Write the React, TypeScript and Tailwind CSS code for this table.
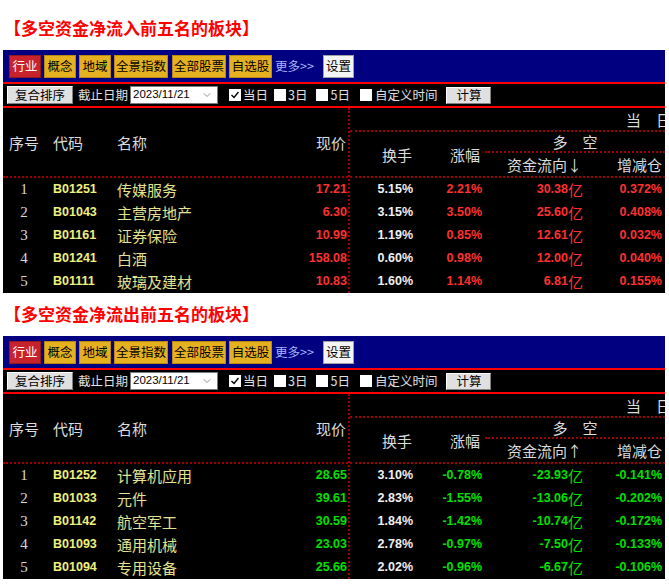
import React from 'react';
import { ChevronDown } from 'lucide-react';

type Row = {
  code: string;
  name: string;
  price: string;
  turnover: string;
  change: string;
  flow: string;
  pos: string;
};

const inflow: Row[] = [
  { code: 'B01251', name: '传媒服务', price: '17.21', turnover: '5.15%', change: '2.21%', flow: '30.38', pos: '0.372%' },
  { code: 'B01043', name: '主营房地产', price: '6.30', turnover: '3.15%', change: '3.50%', flow: '25.60', pos: '0.408%' },
  { code: 'B01161', name: '证券保险', price: '10.99', turnover: '1.19%', change: '0.85%', flow: '12.61', pos: '0.032%' },
  { code: 'B01241', name: '白酒', price: '158.08', turnover: '0.60%', change: '0.98%', flow: '12.00', pos: '0.040%' },
  { code: 'B01111', name: '玻璃及建材', price: '10.83', turnover: '1.60%', change: '1.14%', flow: '6.81', pos: '0.155%' },
];

const outflow: Row[] = [
  { code: 'B01252', name: '计算机应用', price: '28.65', turnover: '3.10%', change: '-0.78%', flow: '-23.93', pos: '-0.141%' },
  { code: 'B01033', name: '元件', price: '39.61', turnover: '2.83%', change: '-1.55%', flow: '-13.06', pos: '-0.202%' },
  { code: 'B01142', name: '航空军工', price: '30.59', turnover: '1.84%', change: '-1.42%', flow: '-10.74', pos: '-0.172%' },
  { code: 'B01093', name: '通用机械', price: '23.03', turnover: '2.78%', change: '-0.97%', flow: '-7.50', pos: '-0.133%' },
  { code: 'B01094', name: '专用设备', price: '25.66', turnover: '2.02%', change: '-0.96%', flow: '-6.67', pos: '-0.106%' },
];

const num = "font-['Liberation_Sans',sans-serif] font-bold text-[12.5px]";

const Check = ({ on }: { on?: boolean }) => (
  <span className="flex h-[12px] w-[12px] items-center justify-center bg-white">
    {on && (
      <svg width="10" height="10" viewBox="0 0 10 10">
        <path d="M1.5 5 L4 7.5 L8.5 2" fill="none" stroke="#000" strokeWidth="1.4" />
      </svg>
    )}
  </span>
);

const NavBar = () => {
  const yellow = 'h-[23px] flex items-center justify-center bg-[#e6b120] border border-[#b88a10] text-black';
  return (
    <div className="flex h-[32px] items-center bg-[#000080] pl-[6px] text-[12.5px] leading-none">
      <div className="flex h-[23px] w-[32px] items-center justify-center border border-[#901820] bg-[#c8232c] text-white">行业</div>
      <div className={`${yellow} ml-[3px] w-[32px]`}>概念</div>
      <div className={`${yellow} ml-[3px] w-[32px]`}>地域</div>
      <div className={`${yellow} ml-[3px] w-[54px]`}>全景指数</div>
      <div className={`${yellow} ml-[4px] w-[54px]`}>全部股票</div>
      <div className={`${yellow} ml-[3px] w-[43px]`}>自选股</div>
      <span className="ml-[3px] text-[#aab4ff]">更多&gt;&gt;</span>
      <div className="ml-[9px] flex h-[23px] w-[31px] items-center justify-center border border-[#a0a0a0] bg-[#f4f4f4] text-black">设置</div>
    </div>
  );
};

const ToolBar = () => (
  <div className="flex h-[22px] items-center bg-black pl-[4px] text-[12.5px] leading-none text-[#e0e0e0]">
    <div className="flex h-[18px] w-[66px] items-center justify-center border border-t-white border-l-white border-r-[#808080] border-b-[#808080] bg-[#e0e0e0] text-black">复合排序</div>
    <span className="ml-[5px]">截止日期</span>
    <div className="ml-[2px] flex h-[18px] w-[88px] items-center justify-between border border-[#7a7a7a] bg-white pl-[2px] pr-[4px] font-['Liberation_Sans',sans-serif] text-[11.5px] text-black">
      <span>2023/11/21</span>
      <ChevronDown size={12} strokeWidth={1.5} color="#707070" />
    </div>
    <div className="ml-[11px] flex items-center gap-[2px]"><Check on /><span>当日</span></div>
    <div className="ml-[6px] flex items-center gap-[2px]"><Check /><span>3日</span></div>
    <div className="ml-[9px] flex items-center gap-[2px]"><Check /><span>5日</span></div>
    <div className="ml-[10px] flex items-center gap-[3px]"><Check /><span>自定义时间</span></div>
    <div className="ml-[9px] flex h-[17px] w-[45px] items-center justify-center border border-t-white border-l-white border-r-[#808080] border-b-[#808080] bg-[#e0e0e0] text-black">计算</div>
  </div>
);

const dot = 'border-dotted border-[#a00000]';

const Board = ({ title, rows, up, top, gap }: { title: string; rows: Row[]; up?: boolean; top: string; gap: string }) => {
  const val = up ? 'text-[#00e000]' : 'text-[#ff3030]';
  return (
    <div>
      <div className={`${gap} ${top} pl-[4px] text-[17px] font-bold leading-[20px] text-[#ff0000]`}>{title}</div>
      <div className="ml-[3px] w-[662px] overflow-hidden bg-black">
        <NavBar />
        <div className="h-[2px] bg-[#ff0000]" />
        <ToolBar />
        <div className="h-[2px] bg-[#ff0000]" />
        <div className="flex text-[15px] leading-none text-[#dcdcdc]">
          {/* left columns */}
          <div className="w-[345px]">
            <div className={`flex h-[70px] items-center border-b-2 ${dot}`}>
              <div className="w-[42px] text-center">序号</div>
              <div className="w-[67px] pl-[8px]">代码</div>
              <div className="flex-1 pl-[5px]">名称</div>
              <div className="w-[90px] pr-[2px] text-right">现价</div>
            </div>
            {rows.map((r, i) => (
              <div key={r.code} className="flex h-[23px] items-center">
                <div className="w-[42px] text-center font-['Liberation_Serif',serif] text-[15px] text-[#d8d8d8]">{i + 1}</div>
                <div className={`w-[67px] pl-[8px] ${num} text-[#f0f07c]`}>{r.code}</div>
                <div className="flex-1 pl-[5px] text-[#e2e290]">{r.name}</div>
                <div className={`w-[90px] pr-[1px] text-right ${num} ${val}`}>{r.price}</div>
              </div>
            ))}
          </div>
          {/* right columns */}
          <div className={`w-[317px] border-l-2 ${dot}`}>
            <div className={`h-[70px] border-b-2 ${dot}`}>
              <div className={`flex h-[24px] items-center justify-end border-b-2 ${dot}`}>
                <span className="mr-[-6px]">当　日</span>
              </div>
              <div className="flex h-[44px]">
                <div className="flex w-[65px] items-center justify-end pr-[3px]">换手</div>
                <div className="flex w-[70px] items-center justify-end pr-[5px]">涨幅</div>
                <div className="w-[180px]">
                  <div className={`flex h-[21px] items-center justify-center border-b-2 ${dot}`}>多　空</div>
                  <div className="flex h-[23px] items-center">
                    <div className="w-[102px] pr-[5px] text-right">资金流向{up ? '↑' : '↓'}</div>
                    <div className="w-[78px] pr-[3px] text-right">增减仓</div>
                  </div>
                </div>
              </div>
            </div>
            {rows.map((r) => (
              <div key={r.code} className="flex h-[23px] items-center">
                <div className={`w-[65px] pr-[2px] text-right ${num} text-[#f0f0f0]`}>{r.turnover}</div>
                <div className={`w-[70px] pr-[3px] text-right ${num} ${val}`}>{r.change}</div>
                <div className={`flex w-[102px] items-center justify-end pr-[4px] ${val}`}>
                  <span className={num}>{r.flow}</span>
                  <span className="text-[15px]">亿</span>
                </div>
                <div className={`w-[78px] pr-[3px] text-right ${num} ${val}`}>{r.pos}</div>
              </div>
            ))}
          </div>
        </div>
      </div>
    </div>
  );
}

export default function App() {
  return (
    <div className="h-[588px] w-[669px] overflow-hidden bg-white font-['Noto_Sans_CJK_SC',sans-serif]">
      <Board title="【多空资金净流入前五名的板块】" rows={inflow} top="pt-[18px]" gap="h-[50px]" />
      <Board title="【多空资金净流出前五名的板块】" rows={outflow} up top="pt-[11px]" gap="h-[43px]" />
    </div>
  );
}
